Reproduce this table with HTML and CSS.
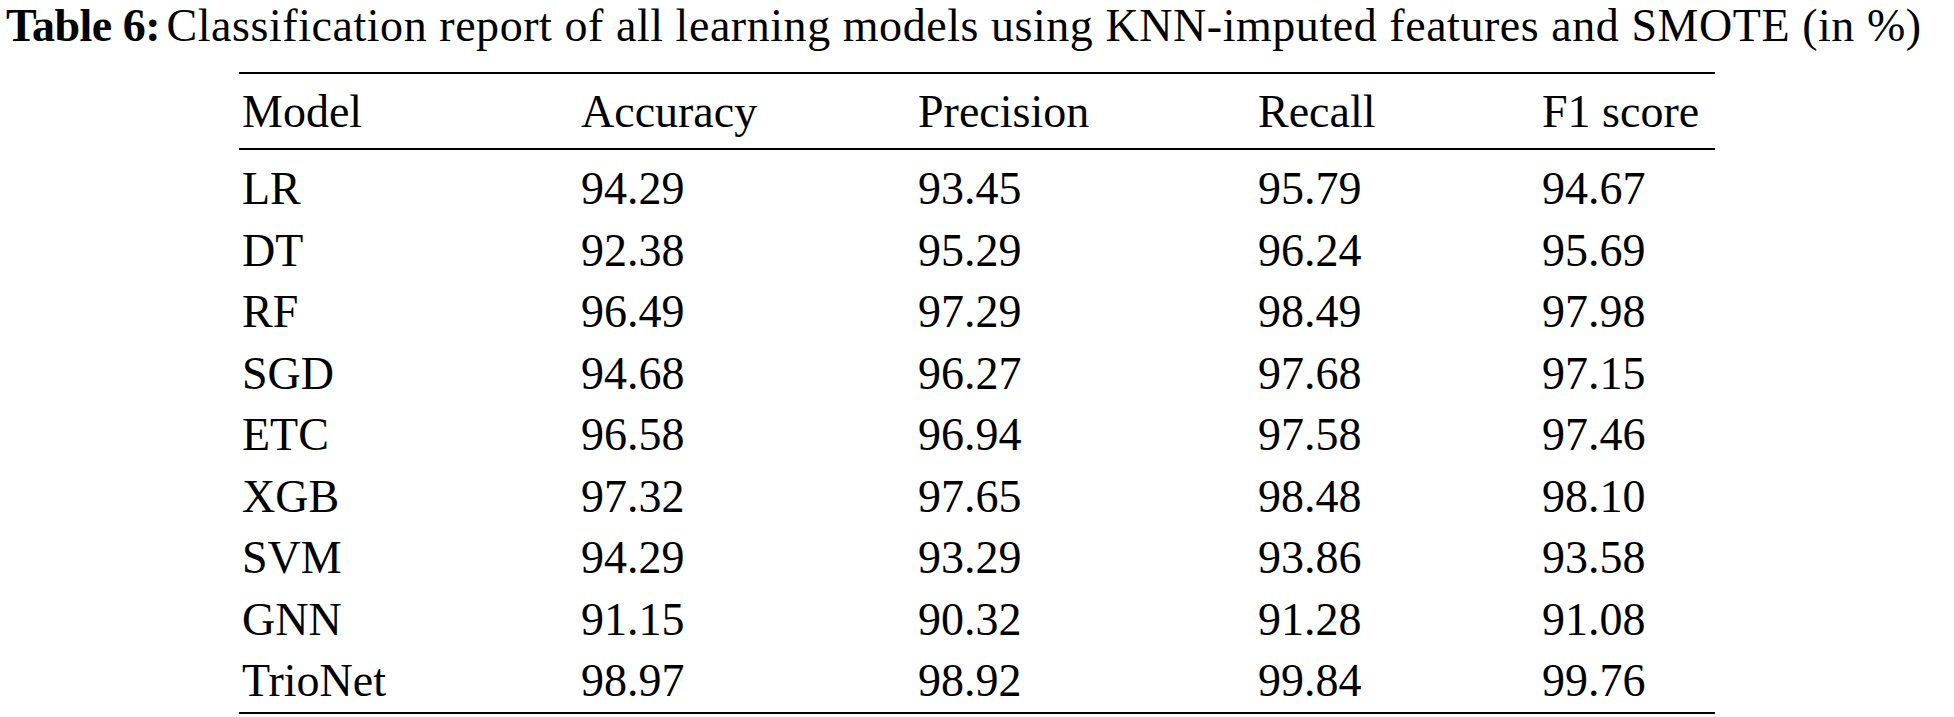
FILE: index.html
```html
<!DOCTYPE html>
<html lang="en">
<head>
<meta charset="utf-8">
<title>Table 6</title>
<link rel="stylesheet" href="styles.css">
</head>
<body>
<div class="page">
  <p class="caption"><span class="label">Table 6:</span> <span class="caption-text">Classification report of all learning models using KNN-imputed features and SMOTE (in %)</span></p>
  <table class="report">
    <thead>
      <tr><th>Model</th><th>Accuracy</th><th>Precision</th><th>Recall</th><th>F1 score</th></tr>
    </thead>
    <tbody>
      <tr><td>LR</td><td>94.29</td><td>93.45</td><td>95.79</td><td>94.67</td></tr>
      <tr><td>DT</td><td>92.38</td><td>95.29</td><td>96.24</td><td>95.69</td></tr>
      <tr><td>RF</td><td>96.49</td><td>97.29</td><td>98.49</td><td>97.98</td></tr>
      <tr><td>SGD</td><td>94.68</td><td>96.27</td><td>97.68</td><td>97.15</td></tr>
      <tr><td>ETC</td><td>96.58</td><td>96.94</td><td>97.58</td><td>97.46</td></tr>
      <tr><td>XGB</td><td>97.32</td><td>97.65</td><td>98.48</td><td>98.10</td></tr>
      <tr><td>SVM</td><td>94.29</td><td>93.29</td><td>93.86</td><td>93.58</td></tr>
      <tr><td>GNN</td><td>91.15</td><td>90.32</td><td>91.28</td><td>91.08</td></tr>
      <tr><td>TrioNet</td><td>98.97</td><td>98.92</td><td>99.84</td><td>99.76</td></tr>
    </tbody>
  </table>
</div>
</body>
</html>
```
FILE: styles.css
```css
html, body {
  margin: 0;
  padding: 0;
  background: #ffffff;
}

.page {
  font-family: "Liberation Serif", "Times New Roman", serif;
  color: #000000;
  font-size: 46px;
}

.caption {
  margin: 0;
  padding-left: 6px;
  line-height: 51px;
  white-space: nowrap;
}

.label {
  font-weight: bold;
  letter-spacing: -0.5px;
  margin-right: -5px;
}

.caption-text {
  letter-spacing: 0.55px;
}

.report {
  margin: 21px 0 0 239px;
  border-collapse: collapse;
  border-top: 2px solid #000;
  border-bottom: 2px solid #000;
}

.report th,
.report td {
  text-align: left;
  font-weight: normal;
  padding: 0 0 0 3px;
  vertical-align: baseline;
}

.report th:nth-child(1) { width: 336px; }
.report th:nth-child(2) { width: 334px; }
.report th:nth-child(3) { width: 337px; }
.report th:nth-child(4) { width: 281px; }
.report th:nth-child(5) { width: 173px; }

.report thead th {
  line-height: 51px;
  padding-top: 12px;
  padding-bottom: 11px;
  border-bottom: 2px solid #000;
}

.report tbody td {
  line-height: 61.5px;
}

.report tbody tr:first-child td {
  padding-top: 8px;
}
```
